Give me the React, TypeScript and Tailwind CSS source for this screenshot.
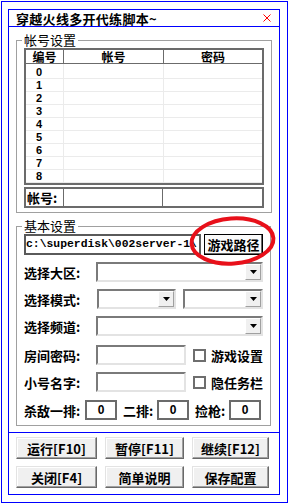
import React from 'react';

const rows = [0, 1, 2, 3, 4, 5, 6, 7, 8];

const sunken =
  'border-2 border-t-[#7a7a7a] border-l-[#7a7a7a] border-b-[#e3e3e3] border-r-[#e3e3e3] bg-white';

const Combo: React.FC<{ w: string }> = ({ w }) => (
  <div className={`${w} h-[20px] ${sunken} flex justify-end`}>
    <div className="w-[16px] h-full bg-[#f0f0f0] border border-t-white border-l-white border-b-[#a0a0a0] border-r-[#a0a0a0] flex items-center justify-center">
      <svg width="7" height="4" viewBox="0 0 7 4">
        <polygon points="0,0 7,0 3.5,4" fill="#000" />
      </svg>
    </div>
  </div>
);

const Label: React.FC<{ children: React.ReactNode; w?: string }> = ({ children, w = 'w-[72px]' }) => (
  <div className={`${w} shrink-0 text-[13px] font-bold leading-none`}>{children}</div>
);

const CheckItem: React.FC<{ text: string }> = ({ text }) => (
  <div className="flex items-center ml-[7px]">
    <div className="w-[13px] h-[13px] border-2 border-[#6e6e6e] bg-white" />
    <span className="ml-[5px] text-[13px] font-bold leading-none">{text}</span>
  </div>
);

const NumBox: React.FC = () => (
  <div className="w-[32px] h-[20px] border-2 border-[#6b6b6b] bg-white flex items-center justify-center font-['Liberation_Sans',sans-serif] text-[12px] font-bold leading-none">
    0
  </div>
);

const Btn: React.FC<{ text: string }> = ({ text }) => (
  <button className="h-[22px] bg-[#f0f0f0] border border-t-[#e3e3e3] border-l-[#e3e3e3] border-b-[#696969] border-r-[#696969] shadow-[inset_-1px_-1px_0_#a0a0a0,inset_1px_1px_0_#ffffff] text-[13px] font-bold leading-none flex items-center justify-center">
    {text}
  </button>
);

export default function App() {
  return (
    <div className="relative w-[288px] h-[503px] bg-white pl-[1px] pt-[1px] text-black font-['Noto_Sans_CJK_SC','Noto_Sans',sans-serif]">
      <div className="w-[287px] h-[502px] border border-[#0000ff] pl-[6px] pt-[7px]">
        <div className="w-[272px] h-[486px] border border-[#0000ff] flex flex-col">
          {/* title bar */}
          <div className="h-[17px] shrink-0 border-b border-[#0000ff] flex items-center justify-between pl-[7px] pr-[8px]">
            <span className="text-[13px] font-bold leading-none tracking-[0.3px]">穿越火线多开代练脚本~</span>
            <svg width="8" height="8" viewBox="0 0 8 8">
              <path d="M0.5 0.5 L7.5 7.5 M7.5 0.5 L0.5 7.5" stroke="#ff0000" strokeWidth="1" />
            </svg>
          </div>

          <div className="flex-1">
            {/* 帐号设置 */}
            <fieldset className="mt-[6px] ml-[7px] w-[255px] border border-[#a0a0a0] px-[7px] pb-[4px]">
              <legend className="-ml-[2px] px-[2px] text-[13px] leading-[14px]">帐号设置</legend>
              <div className="mt-[1px] w-[240px] border-2 border-[#6b6b6b]">
                <div className="grid grid-cols-[38px_100px_98px] h-[14px] border-b border-[#6b6b6b] text-[12px] font-bold leading-none">
                  <div className="border-r border-[#6b6b6b] flex items-center justify-center">编号</div>
                  <div className="border-r border-[#6b6b6b] flex items-center justify-center">帐号</div>
                  <div className="flex items-center justify-center">密码</div>
                </div>
                <div className="grid grid-cols-[38px_100px_98px] h-[119px]">
                  <div className="border-r border-[#ebebeb] pt-[2px]">
                    {rows.map((n) => (
                      <div key={n} className="h-[13px] border-b border-[#ebebeb] pl-[10px] flex items-center font-['Liberation_Sans',sans-serif] text-[11px] font-bold leading-none">
                        {n}
                      </div>
                    ))}
                  </div>
                  <div className="border-r border-[#ebebeb] pt-[2px]">
                    {rows.map((n) => (
                      <div key={n} className="h-[13px] border-b border-[#ebebeb]" />
                    ))}
                  </div>
                  <div className="pt-[2px]">
                    {rows.map((n) => (
                      <div key={n} className="h-[13px] border-b border-[#ebebeb]" />
                    ))}
                  </div>
                </div>
              </div>
              <div className="mt-[2px] w-[240px] h-[21px] border-2 border-[#6b6b6b] grid grid-cols-[38px_99px_99px]">
                <div className="border-r border-[#6b6b6b] flex items-center pl-[1px] text-[13px] font-bold leading-none">帐号:</div>
                <div className="border-r border-[#6b6b6b]" />
                <div />
              </div>
            </fieldset>

            {/* 基本设置 */}
            <fieldset className="mt-[6px] ml-[7px] w-[255px] border border-[#a0a0a0] px-[7px] pb-[5px]">
              <legend className="-ml-[2px] px-[2px] text-[13px] leading-[14px]">基本设置</legend>
              <div className="mt-[1px] flex items-center">
                <div className="w-[177px] h-[21px] border-2 border-[#5a5a5a] bg-white overflow-hidden whitespace-nowrap flex items-center font-['Liberation_Mono',monospace] text-[11.4px] font-bold leading-none">
                  c:\superdisk\002server-1\
                </div>
                <button className="ml-[3px] w-[59px] h-[21px] border border-black bg-[#fafafa] shadow-[inset_-1px_-1px_0_#696969] text-[13px] font-bold leading-none flex items-center justify-center">
                  游戏路径
                </button>
              </div>

              <div className="mt-[7px] flex items-center">
                <Label>选择大区:</Label>
                <Combo w="w-[167px]" />
              </div>

              <div className="mt-[7px] flex items-center">
                <Label>选择模式:</Label>
                <div className="ml-[1px] flex gap-[7px]">
                  <Combo w="w-[79px]" />
                  <Combo w="w-[80px]" />
                </div>
              </div>

              <div className="mt-[7px] flex items-center">
                <Label>选择频道:</Label>
                <Combo w="w-[167px]" />
              </div>

              <div className="mt-[9px] flex items-center">
                <Label>房间密码:</Label>
                <div className={`w-[90px] h-[20px] ${sunken}`} />
                <CheckItem text="游戏设置" />
              </div>

              <div className="mt-[7px] flex items-center">
                <Label>小号名字:</Label>
                <div className={`w-[90px] h-[20px] ${sunken}`} />
                <CheckItem text="隐任务栏" />
              </div>

              <div className="mt-[8px] flex items-center">
                <Label w="w-[61px]">杀敌一排:</Label>
                <NumBox />
                <Label w="w-[34px] ml-[6px]">二排:</Label>
                <NumBox />
                <Label w="w-[34px] ml-[6px]">捡枪:</Label>
                <NumBox />
              </div>
            </fieldset>
          </div>

          {/* buttons */}
          <div className="h-[62px] shrink-0 border-t border-[#0000ff] pt-[4px] pl-[7px]">
            <div className="grid grid-cols-[81px_79px_77px] gap-x-[8px] gap-y-[7px]">
              <Btn text="运行[F10]" />
              <Btn text="暂停[F11]" />
              <Btn text="继续[F12]" />
              <Btn text="关闭[F4]" />
              <Btn text="简单说明" />
              <Btn text="保存配置" />
            </div>
          </div>
        </div>
      </div>

      {/* red highlight ring */}
      <svg className="absolute left-[186px] top-[214px] pointer-events-none" width="96" height="56" viewBox="0 0 96 56">
        <ellipse cx="46.5" cy="27" rx="41" ry="22.5" fill="none" stroke="#e8101a" strokeWidth="4" transform="rotate(-4 46.5 27)" />
      </svg>
    </div>
  );
}
